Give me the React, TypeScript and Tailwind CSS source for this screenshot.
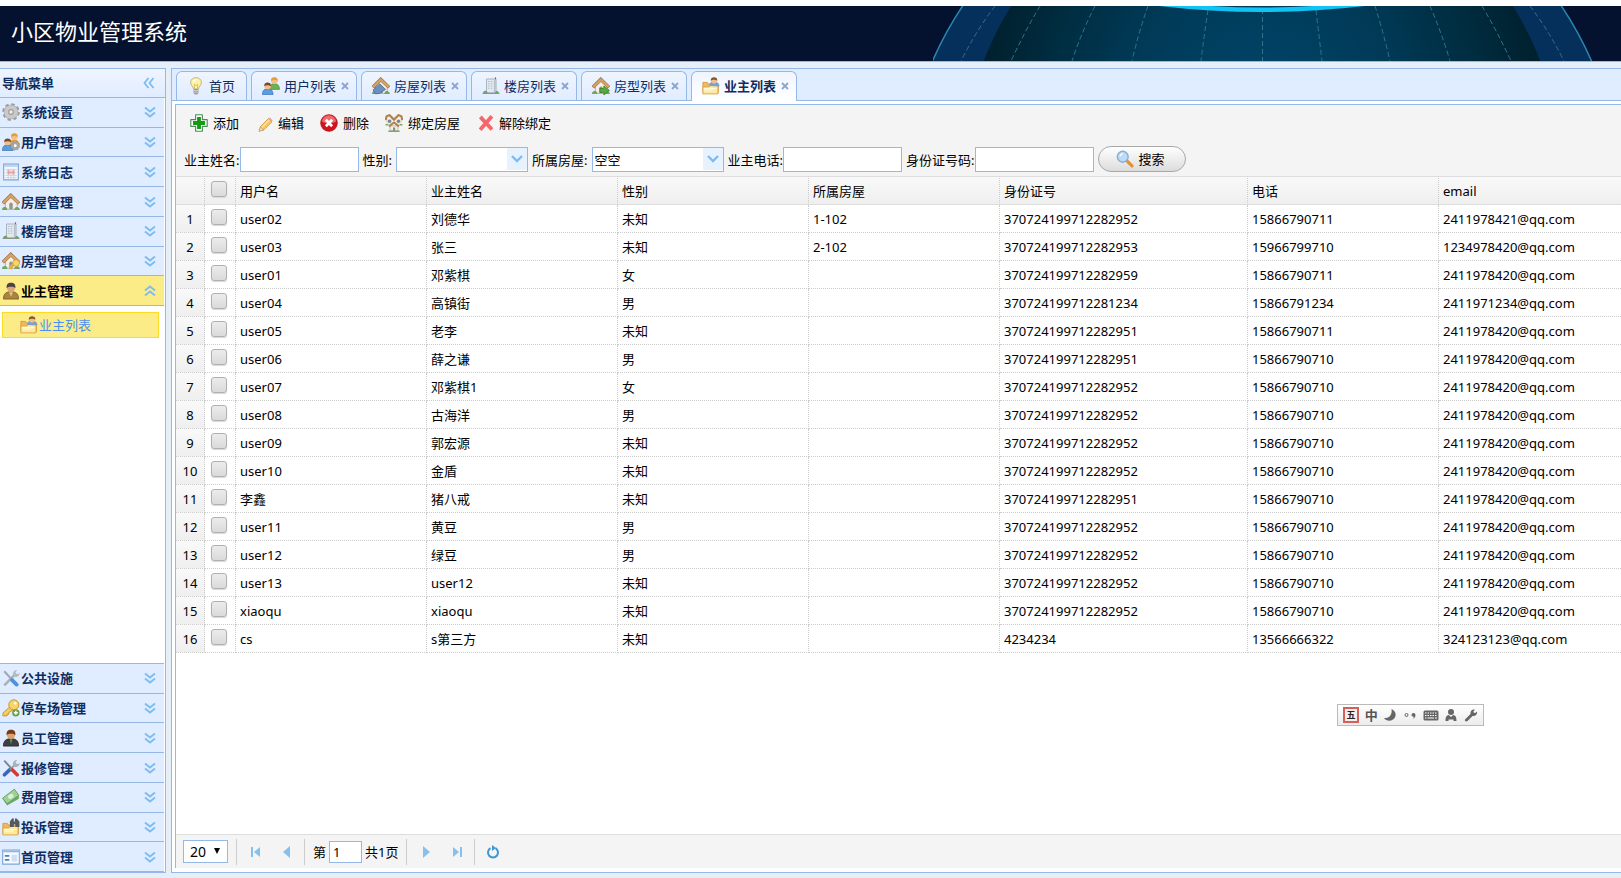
import { ReactNode } from "react";

type IconProps = { children: ReactNode };

const Icon = ({ children }: IconProps) => (
  <svg viewBox="0 0 16 16" className="size-[18px] shrink-0" aria-hidden="true">
    {children}
  </svg>
);

const House = () => (
  <>
    <path d="M3 8v6.5h10.500V8L8 3.500z" fill="#f3efe6" stroke="#a9a294" strokeWidth=".7" />
    <path d="M.8 9.200 7.800 2.200 15.200 9.200" fill="none" stroke="#9a6a38" strokeWidth="3" />
    <path d="M1 9 7.800 2.300 15 9" fill="none" stroke="#d6a368" strokeWidth="2" />
    <path d="M6.500 14.500V10a1.500 1.500 0 0 1 3 0v4.500z" fill="#8f959b" />
    <path d="M0 15c0-2 1.500-3 3-2.500s2 1.500 1.500 2.500zM11 15c0-2 1.500-3 3-2.300s2 1.300 1.800 2.300z" fill="#6fa65c" />
  </>
);

const Building = () => (
  <>
    <path d="M4 1.800h8.500v12.200H4z" fill="#e4e9ef" stroke="#a3abb5" strokeWidth=".8" />
    <path d="M10.500 2.200h1.700v11.500h-1.700z" fill="#b9c2cc" />
    <path d="M5.500 4h1.200M7.800 4H9M5.500 6h1.200M7.800 6H9M5.500 8h1.200M7.800 8H9M5.500 10h1.200M7.800 10H9" stroke="#9db8d8" />
    <path d="M12 2V.3" stroke="#c44" />
    <path d="M1 14.800c0-2 1-2.800 2.400-2.500S5 14 5 14.800zM11.500 14.800c0-2 1-2.600 2-2.300s1.700 1.300 1.700 2.300z" fill="#6aa55c" />
    <path d="M.5 14.600h15" stroke="#8b9884" />
  </>
);

const Folder = () => (
  <>
    <path d="M.8 4.800h4l1 1.500h8.700V14H.8z" fill="#efb95c" stroke="#d09038" strokeWidth=".7" />
    <path d="M.8 15V8.800h5.400l1.200-1.300h6.800V15z" fill="#fdeaa0" stroke="#dba444" strokeWidth=".8" />
    <path d="M2 10.200h10.800M2 11.500h8" stroke="#fffbe0" />
  </>
);

const icons: Record<string, ReactNode> = {
  bulb: (
    <>
      <path d="M5.800 10.500C5.600 8.500 3.200 7.500 3.200 4.900 3.200 2.300 5.300.6 8 .6s4.800 1.700 4.800 4.300c0 2.600-2.400 3.600-2.600 5.600z" fill="#fbf3a8" stroke="#bdb072" strokeWidth=".8" />
      <path d="M5.500 4.500c.3-1.300 1.200-2 2.300-2.200" stroke="#fff" fill="none" />
      <path d="M6.700 10 6.500 6.500 8 7.500l1.500-1-.2 3.500" stroke="#d9a441" strokeWidth=".6" fill="none" />
      <path d="M5.800 10.700h4.400v3.500L9 15.500H7l-1.200-1.300z" fill="#9b9ea3" />
      <path d="M5.800 12h4.400M5.800 13.500h4.400" stroke="#d4d6d9" strokeWidth=".7" />
    </>
  ),
  gear: (
    <>
      <circle cx="8" cy="8" r="6.300" fill="none" stroke="#9c9c9c" strokeWidth="3" strokeDasharray="2.800 2.148" />
      <circle cx="8" cy="8" r="4.300" fill="none" stroke="#a8a8a8" strokeWidth="4.400" />
      <circle cx="8" cy="8" r="4.300" fill="none" stroke="#c9c9c9" strokeWidth="3.400" />
      <circle cx="8" cy="8" r="2" fill="#eee" stroke="#8e8e8e" strokeWidth=".8" />
    </>
  ),
  users: (
    <>
      <path d="M6.500 11c0-4 2-5 4.500-5s4.500 1 4.500 5z" fill="#6cb255" stroke="#4b8b3a" strokeWidth=".6" />
      <circle cx="11" cy="3.400" r="2.900" fill="#f0bf8c" />
      <path d="M8 3.600C7.800 1.200 9.300.3 11 .3s3.200.9 3 3.300C12.500 2.300 9.600 2.400 8 3.600z" fill="#e0a13b" />
      <path d="M.4 15.700c0-4.200 2-5.200 4.600-5.200s4.800 1 4.800 5.200z" fill="#5b9bdf" stroke="#3972b5" strokeWidth=".6" />
      <circle cx="5" cy="8" r="2.900" fill="#f0bf8c" />
      <path d="M2 8.200C1.800 5.800 3.300 4.900 5 4.900s3.200.9 3 3.300C6.500 7 3.600 7 2 8.200z" fill="#7a4a24" />
    </>
  ),
  usersGear: (
    <>
      <path d="M6.500 11c0-4 2-5 4.500-5s4.500 1 4.500 5z" fill="#e2a045" />
      <circle cx="11" cy="3.400" r="2.900" fill="#f0bf8c" />
      <path d="M8 3.600C7.800 1.200 9.300.3 11 .3s3.200.9 3 3.300C12.500 2.300 9.600 2.400 8 3.600z" fill="#e0a13b" />
      <path d="M.4 15.700c0-4.200 2-5.200 4.600-5.200s4.800 1 4.800 5.200z" fill="#5b9bdf" stroke="#3972b5" strokeWidth=".6" />
      <circle cx="5" cy="8" r="2.900" fill="#f0bf8c" />
      <path d="M2 8.200C1.800 5.800 3.300 4.900 5 4.900s3.200.9 3 3.300C6.500 7 3.600 7 2 8.200z" fill="#7a4a24" />
      <circle cx="11.800" cy="11.300" r="2.600" fill="#fff" stroke="#a6a6a6" strokeWidth="2.600" />
      <circle cx="11.800" cy="11.300" r="4" fill="none" stroke="#8f8f8f" strokeWidth=".8" strokeDasharray="1.600 1.540" />
    </>
  ),
  log: (
    <>
      <path d="M1.500 1h13v14h-13z" fill="#f4f8fd" stroke="#7fa3d0" />
      <path d="M2 1.500h12v2H2z" fill="#bcd4f0" />
      <path d="M3 6h10M3 8.500h10M3 11h10M3 13h10M5.500 5v9M8 5v9M10.500 5v9" stroke="#c3d2e4" strokeWidth=".8" />
      <path d="M5 6.500h1.700v1.300h2.600V6.500H11v3.700H9.300V9H6.700v1.200H5z" fill="#f39a94" />
    </>
  ),
  house: <House />,
  houseBlue: (
    <>
      <House />
      <path d="M1 11.500 7 6l5 5-5 3.500L3 15z" fill="#6b8fbe" stroke="#49688f" strokeWidth=".7" />
    </>
  ),
  houseGo: (
    <>
      <House />
      <path d="M7 10.200h3.500V8l5 4-5 4v-2.200H7z" fill="#58a83d" stroke="#3b7d27" strokeWidth=".7" />
    </>
  ),
  houseKey: (
    <>
      <House />
      <path d="m7.500 15.300.3-2 3-2.800" fill="none" stroke="#e6b03a" strokeWidth="2.600" />
      <circle cx="12.500" cy="9.800" r="3" fill="#f9d96e" stroke="#d0992f" strokeWidth=".8" />
    </>
  ),
  houses: (
    <>
      <path d="M1 4.500h5V9H1zM10 4.500h5V9h-5z" fill="#eee8da" />
      <path d="M.5 5.500 1.500 2 4 1l4 4 4-4 2.500 1 1 3.500" fill="none" stroke="#b3824c" strokeWidth="1.900" />
      <circle cx="4" cy="6.500" r="1.600" fill="#7d8791" />
      <circle cx="12" cy="6.500" r="1.600" fill="#7d8791" />
      <path d="M4.500 10.500h7V15h-7z" fill="#f2eee4" stroke="#a9a294" strokeWidth=".6" />
      <path d="M3.500 11 8 7.500l4.500 3.500" fill="none" stroke="#b3824c" strokeWidth="1.700" />
      <path d="M7.200 12h1.800v3H7.200z" fill="#7d8791" />
      <path d="M.5 9.500h2.500M13 9.500h2.500M3 15.300h10" stroke="#7aa866" strokeWidth="1.300" />
    </>
  ),
  building: <Building />,
  owner: (
    <>
      <path d="M1.300 15.200c0-5.200 2.500-6.500 6.700-6.500s6.700 1.300 6.700 6.500z" fill="#a98440" stroke="#745820" strokeWidth=".7" />
      <path d="M6.300 9 8 13l1.700-4z" fill="#dcc88a" />
      <circle cx="8" cy="5.200" r="3.700" fill="#dca878" />
      <path d="M4.200 5.500C3.600 2.200 5.300.6 8 .6s4.400 1.600 3.800 4.900C10.500 3.800 5.500 3.800 4.200 5.500z" fill="#4a4340" />
    </>
  ),
  staff: (
    <>
      <path d="M1.300 15.200c0-5.200 2.500-6.500 6.700-6.500s6.700 1.300 6.700 6.500z" fill="#3f3f43" stroke="#222" strokeWidth=".7" />
      <path d="M6.800 9 8 13.500 9.200 9z" fill="#4ea24a" />
      <circle cx="8" cy="5.200" r="3.700" fill="#dfa06a" />
      <path d="M4.200 5.500C3.600 2.200 5.300.6 8 .6s4.400 1.600 3.800 4.900C10.500 3.800 5.500 3.800 4.200 5.500z" fill="#703c18" />
    </>
  ),
  folderUser: (
    <>
      <Folder />
      <path d="M6.500 8c0-3 1.600-4 4.200-4s4.800 1.300 4.800 4.500z" fill="#7ba0cf" />
      <circle cx="10.700" cy="3.200" r="2.700" fill="#f0bf8c" />
      <path d="M7.800 3.300C7.600 1 9.100.2 10.700.2s3.200.8 2.900 3.100C12.200 2.200 9.300 2.200 7.800 3.300z" fill="#8a5630" />
    </>
  ),
  folderFind: (
    <>
      <Folder />
      <path d="M7 7V3l2-2.500h1.500V3h1V.5H13L15.500 3v5h-3.700V5.500h-1.300V8H7z" fill="#55585e" />
    </>
  ),
  tools: (
    <>
      <path d="M2 14.500 11 5.500" stroke="#aab0b7" strokeWidth="2.200" />
      <path d="M10 5.800c-1-2.500.8-5 3.400-4.800L12 2.800l.8 1.500 1.800.2 1-1.500c.5 2.800-2 4.700-4.500 3.900z" fill="#b5bbc2" />
      <path d="m2 2 6 6.500" stroke="#a0a7af" strokeWidth="1.800" />
      <path d="m9 9.800 4 4" stroke="#4d93d8" strokeWidth="3.400" strokeLinecap="round" />
    </>
  ),
  repair: (
    <>
      <path d="M2.200 14 7 9.500" stroke="#3569b8" strokeWidth="3.200" strokeLinecap="round" />
      <path d="m7 9.500 4-4" stroke="#9ba2aa" strokeWidth="1.800" />
      <path d="M10 5.800c-1-2.500.8-5 3.400-4.800L12 2.800l.8 1.500 1.800.2 1-1.500c.5 2.800-2 4.700-4.500 3.900z" fill="#aab0b7" />
      <path d="m2 1.500 6.500 7" stroke="#7e858d" strokeWidth="1.700" />
      <path d="m9.300 9.800 4.200 4.200" stroke="#d33a35" strokeWidth="3.200" strokeLinecap="round" />
    </>
  ),
  key: (
    <>
      <path d="M7.500 6.500.8 12.500V15h3.700v-1.500H6V12l4-2.500z" fill="#f6ce5a" stroke="#c68f28" strokeWidth=".8" />
      <circle cx="10.500" cy="5.200" r="4.500" fill="#f8d466" stroke="#c68f28" strokeWidth=".8" />
      <circle cx="11.700" cy="3.800" r="1.200" fill="#fff" />
      <circle cx="12.300" cy="12.300" r="3.300" fill="#6c9e4a" />
      <path d="M10.500 12.300h3.600M12.300 10.500v3.600" stroke="#fff" strokeWidth="1.300" />
    </>
  ),
  money: (
    <>
      <path d="M.5 9.500 11 1l4 5.500v3L4.500 15.500z" fill="#6aa965" />
      <path d="M.5 9 11 1l4 5.500L4.500 14z" fill="#9ed198" stroke="#5d9c58" strokeWidth=".7" />
      <ellipse cx="7.800" cy="7.500" rx="2.600" ry="2" fill="#d9f0d5" transform="rotate(-35 7.800 7.500)" />
    </>
  ),
  layout: (
    <>
      <path d="M.6 1.800h14.800v12.500H.6z" fill="#f7faff" stroke="#7fa6d6" />
      <path d="M1 2.200h14v1.600H1z" fill="#8fb6e6" />
      <path d="M2.500 7h4M2.500 10.500h4" stroke="#4f80bd" strokeWidth="1.500" />
      <path d="M8.500 6h5v6h-5z" fill="#cfe0f5" />
    </>
  ),
  add: (
    <>
      <path d="M5 .7h6V5h4.300v6H11v4.300H5V11H.7V5H5z" fill="#fff" stroke="#4c8c54" strokeLinejoin="round" />
      <path d="M6.300 2.700h3.400v3.600h3.600v3.400H9.700v3.600H6.300V9.700H2.700V6.300h3.600z" fill="#129a12" />
    </>
  ),
  edit: (
    <>
      <path d="m4 15 1-4 7-7 3 3-7 7z" fill="#f9c85a" stroke="#cf9134" strokeWidth=".7" />
      <path d="m6 12 7-7" stroke="#fde7a5" />
      <path d="m12 4 1.300-.8 2.300 2.500L15 7z" fill="#e7a1a1" />
      <path d="m3.500 15.500 1.300-4 2.800 2.700z" fill="#f5e4cb" stroke="#a97c4c" strokeWidth=".5" />
    </>
  ),
  remove: (
    <>
      <circle cx="8" cy="8" r="7.400" fill="#d3121d" stroke="#a9131b" strokeWidth=".7" />
      <path d="M1.600 6.500a6.500 6.500 0 0 1 12.800 0c-3 2.500-9.800 2.500-12.800 0z" fill="#ee6a6d" />
      <path d="m5.200 5.200 5.600 5.600m0-5.600-5.600 5.600" stroke="#fff" strokeWidth="2.500" />
    </>
  ),
  cancel: (
    <path d="m5 3.800 8 8.700M13 3.300 4.800 12.800" stroke="#f6666a" strokeWidth="3.400" strokeLinecap="square" />
  ),
  search: (
    <>
      <path d="m9.500 9.500 4.700 4.700" stroke="#e0923a" strokeWidth="2.800" strokeLinecap="round" />
      <circle cx="6" cy="6" r="4.800" fill="#b9dcfb" stroke="#8daecb" strokeWidth="1.300" />
      <path d="M3.500 5.500c.4-1.300 1.400-2 2.700-2" fill="none" stroke="#fff" strokeWidth="1.200" />
    </>
  ),
};

const DoubleChevron = ({ d }: { d: string }) => (
  <svg viewBox="0 0 12 12" className="size-3 shrink-0" fill="none" stroke="#7dbcf0" strokeWidth="1.800" aria-hidden="true">
    <path d={d} />
  </svg>
);

const DOWN = "M1 1.500 6 5.500 11 1.500M1 6.500 6 10.500 11 6.500";
const UP = "M1 5.500 6 1.500 11 5.500M1 10.500 6 6.500 11 10.500";
const LEFT = "M5.500 1 1.500 6 5.500 11M10.500 1 6.500 6 10.500 11";

const topMenu = [
  { icon: "gear", label: "系统设置" },
  { icon: "usersGear", label: "用户管理" },
  { icon: "log", label: "系统日志" },
  { icon: "house", label: "房屋管理" },
  { icon: "building", label: "楼房管理" },
  { icon: "houseKey", label: "房型管理" },
  { icon: "owner", label: "业主管理", active: true },
];

const bottomMenu = [
  { icon: "tools", label: "公共设施" },
  { icon: "key", label: "停车场管理" },
  { icon: "staff", label: "员工管理" },
  { icon: "repair", label: "报修管理" },
  { icon: "money", label: "费用管理" },
  { icon: "folderFind", label: "投诉管理" },
  { icon: "layout", label: "首页管理" },
];

const tabs = [
  { icon: "bulb", label: "首页" },
  { icon: "users", label: "用户列表", closable: true },
  { icon: "houseBlue", label: "房屋列表", closable: true },
  { icon: "building", label: "楼房列表", closable: true },
  { icon: "houseGo", label: "房型列表", closable: true },
  { icon: "folderUser", label: "业主列表", closable: true, active: true },
];

const actions = [
  { icon: "add", label: "添加" },
  { icon: "edit", label: "编辑" },
  { icon: "remove", label: "删除" },
  { icon: "houses", label: "绑定房屋" },
  { icon: "cancel", label: "解除绑定" },
];

const columns = ["用户名", "业主姓名", "性别", "所属房屋", "身份证号", "电话", "email"];

const rows = [
  ["user02", "刘德华", "未知", "1-102", "370724199712282952", "15866790711", "2411978421@qq.com"],
  ["user03", "张三", "未知", "2-102", "370724199712282953", "15966799710", "1234978420@qq.com"],
  ["user01", "邓紫棋", "女", "", "370724199712282959", "15866790711", "2411978420@qq.com"],
  ["user04", "高镇街", "男", "", "370724199712281234", "15866791234", "2411971234@qq.com"],
  ["user05", "老李", "未知", "", "370724199712282951", "15866790711", "2411978420@qq.com"],
  ["user06", "薛之谦", "男", "", "370724199712282951", "15866790710", "2411978420@qq.com"],
  ["user07", "邓紫棋1", "女", "", "370724199712282952", "15866790710", "2411978420@qq.com"],
  ["user08", "古海洋", "男", "", "370724199712282952", "15866790710", "2411978420@qq.com"],
  ["user09", "郭宏源", "未知", "", "370724199712282952", "15866790710", "2411978420@qq.com"],
  ["user10", "金盾", "未知", "", "370724199712282952", "15866790710", "2411978420@qq.com"],
  ["李鑫", "猪八戒", "未知", "", "370724199712282951", "15866790710", "2411978420@qq.com"],
  ["user11", "黄豆", "男", "", "370724199712282952", "15866790710", "2411978420@qq.com"],
  ["user12", "绿豆", "男", "", "370724199712282952", "15866790710", "2411978420@qq.com"],
  ["user13", "user12", "未知", "", "370724199712282952", "15866790710", "2411978420@qq.com"],
  ["xiaoqu", "xiaoqu", "未知", "", "370724199712282952", "15866790710", "2411978420@qq.com"],
  ["cs", "s第三方", "未知", "", "4234234", "13566666322", "324123123@qq.com"],
];

const Banner = () => (
  <header className="mt-1.5 flex h-14 shrink-0 items-center justify-between overflow-hidden border-b border-[#95b8e7] bg-[#04112f] pl-[11px]">
    <h1 className="pb-1.5 text-[22px] leading-8 text-white">小区物业管理系统</h1>
    <svg viewBox="0 0 688 55" className="h-[55px] w-[688px] shrink-0" fill="none" aria-hidden="true">
      <defs>
        <radialGradient id="globe" gradientUnits="userSpaceOnUse" cx="329" cy="90" r="290">
          <stop offset="0" stopColor="#00456a" />
          <stop offset=".45" stopColor="#003a57" />
          <stop offset=".75" stopColor="#002c3f" />
          <stop offset="1" stopColor="#001e2b" />
        </radialGradient>
      </defs>
      <circle cx="329" cy="200" r="360" fill="#05305c" stroke="#2a86ad" strokeWidth="1.500" />
      <circle cx="329" cy="159" r="297" fill="url(#globe)" />
      <g stroke="#2f7488" strokeDasharray="5 3">
        <path d="M62 0Q43 25 28 55M107 0Q92 25 78 55M162 0Q149 25 139 55M215 0Q206 25 199 55M275 4Q271 30 268 55M329.500 3V55" />
        <path d="M597 0Q616 25 631 55M549 0Q564 25 578 55M497 0Q508 25 517 55M442 0Q450 25 457 55M383 4Q386 30 389 55" />
      </g>
      <path d="M226 0Q329 12 432 0H380Q329 3 278 0z" fill="#12c4f5" />
    </svg>
  </header>
);

const MenuItem = ({ icon, label, active }: { icon: string; label: string; active?: boolean }) => (
  <button
    type="button"
    className={
      active
        ? "flex flex-1 items-center gap-px border-b border-[#95b8e7] bg-[#fbec88] pr-2 pl-0.5 font-bold text-black"
        : "flex flex-1 items-center gap-px border-b border-[#95b8e7] bg-[#e0ecff] pr-2 pl-0.5 font-bold text-[#0e2d5f]"
    }
  >
    <Icon>{icons[icon]}</Icon>
    <span className="flex-1 text-left">{label}</span>
    <DoubleChevron d={active ? UP : DOWN} />
  </button>
);

const Sidebar = () => (
  <aside className="flex w-[166px] shrink-0 flex-col border-y border-r border-[#95b8e7] bg-white">
    <div className="flex h-[29px] items-center justify-between border-b border-[#95b8e7] bg-linear-to-b from-[#eff5ff] to-[#e0ecff] pr-2.5 pl-0.5 font-bold text-[#0e2d5f]">
      导航菜单
      <DoubleChevron d={LEFT} />
    </div>
    <nav className="flex flex-1 flex-col pr-px">
      <div className="flex h-[208px] flex-col">
        {topMenu.map((item) => (
          <MenuItem key={item.label} {...item} />
        ))}
      </div>
      <div className="flex-1 pt-1.5 pr-[5px] pl-0.5">
        <a href="#owners" className="flex h-[26px] items-center gap-px border border-[#fbdc20] bg-[#fbec88] pl-[17px] text-[#4a90f5]">
          <Icon>{icons.folderUser}</Icon>
          业主列表
        </a>
      </div>
      <div className="flex h-[209px] flex-col border-t border-[#95b8e7]">
        {bottomMenu.map((item) => (
          <MenuItem key={item.label} {...item} />
        ))}
      </div>
    </nav>
  </aside>
);

const TabStrip = () => (
  <div className="flex h-8 shrink-0 items-end gap-1 border-b border-[#95b8e7] bg-[#e0ecff] pl-1">
    {tabs.map(({ icon, label, closable, active }) => (
      <div
        key={label}
        className={
          active
            ? "-mb-px flex h-[30px] items-center gap-1 rounded-t-md border border-b-0 border-[#95b8e7] bg-linear-to-b from-[#eff5ff] to-white pr-1.5 pb-0.5 pl-2.5 font-bold text-[#0e2d5f]"
            : "flex h-[29px] items-center gap-1 rounded-t-md border border-b-0 border-[#95b8e7] bg-linear-to-b from-[#eff5ff] to-[#e0ecff] pr-1.5 pb-px pl-2.5 text-[#0e2d5f]"
        }
      >
        <button type="button" className={closable ? "flex items-center gap-1" : "flex items-center gap-1 pr-[5px]"}>
          <Icon>{icons[icon]}</Icon>
          {label}
        </button>
        {closable && (
          <button type="button" aria-label={"关闭" + label} className="flex w-[10px] justify-center">
            <svg viewBox="0 0 8 8" className="size-2" stroke="#8aa5d0" strokeWidth="1.800">
              <path d="m1 1 6 6M7 1 1 7" />
            </svg>
          </button>
        )}
      </div>
    ))}
  </div>
);

const TextField = ({ id, label }: { id: string; label: string }) => (
  <div className="flex items-center">
    <label htmlFor={id}>{label}:</label>
    <input id={id} type="text" className="h-[25px] w-[119px] border border-[#95b8e7] bg-white px-1 outline-none" />
  </div>
);

const Combo = ({ id, label, value }: { id: string; label: string; value: string }) => (
  <div className="flex items-center gap-1">
    <label htmlFor={id}>{label}:</label>
    <div className="relative">
      <select id={id} className="block h-[25px] w-[132px] appearance-none border border-[#95b8e7] bg-white pr-6 pl-0.5 outline-none">
        <option>{value}</option>
      </select>
      <span className="pointer-events-none absolute top-px right-px flex h-[22px] w-5 items-center justify-center bg-[#e8f2ff]">
        <svg viewBox="0 0 12 8" className="h-2 w-3" fill="none" stroke="#7dbcf0" strokeWidth="2.400">
          <path d="m1 1 5 5 5-5" />
        </svg>
      </span>
    </div>
  </div>
);

const Toolbar = () => (
  <div className="shrink-0 bg-[#f4f4f4]">
    <div className="flex h-[38px] items-center gap-4 pb-0.5 pl-3.5">
      {actions.map(({ icon, label }) => (
        <button key={label} type="button" className="flex items-center gap-[5px]">
          <Icon>{icons[icon]}</Icon>
          {label}
        </button>
      ))}
    </div>
    <form className="flex h-[33px] items-center gap-1 pl-2">
      <TextField id="name" label="业主姓名" />
      <Combo id="sex" label="性别" value="" />
      <Combo id="house" label="所属房屋" value="空空" />
      <TextField id="phone" label="业主电话" />
      <TextField id="idcard" label="身份证号码" />
      <button
        type="button"
        className="mb-0.5 flex h-[26px] w-[88px] items-center justify-center gap-1 rounded-full border border-[#a8a8a8] bg-linear-to-b from-white to-[#dcdcdc] pr-0.5"
      >
        <Icon>{icons.search}</Icon>
        搜索
      </button>
    </form>
  </div>
);

const Check = ({ label }: { label: string }) => (
  <input
    type="checkbox"
    aria-label={label}
    className="block size-4 appearance-none rounded-[3px] border border-[#b0b0b0] bg-linear-to-b from-[#ececec] to-[#dadada] shadow-[0_1px_1px_#d8d8d8]"
  />
);

const OwnerTable = () => (
  <div className="min-h-0 flex-1 overflow-hidden bg-white">
    <table className="w-full table-fixed border-separate border-spacing-0 text-left whitespace-nowrap">
      <colgroup>
        <col className="w-[29px]" />
        <col className="w-[31px]" />
        <col className="w-[191px]" />
        <col className="w-[191px]" />
        <col className="w-[191px]" />
        <col className="w-[191px]" />
        <col className="w-[248px]" />
        <col className="w-[191px]" />
        <col />
      </colgroup>
      <thead className="[&_th]:h-[29px] [&_th]:border-y [&_th]:border-r [&_th]:border-y-[#ddd] [&_th]:border-r-[#ccc] [&_th]:bg-linear-to-b [&_th]:from-[#f9f9f9] [&_th]:to-[#efefef] [&_th]:font-normal [&_th]:[border-right-style:dotted]">
        <tr>
          <th aria-label="序号" />
          <th className="pb-1 pl-1.5">
            <Check label="全选" />
          </th>
          {columns.map((column) => (
            <th key={column} className="px-1 last:border-r-0">
              {column}
            </th>
          ))}
        </tr>
      </thead>
      <tbody>
        {rows.map((row, i) => (
          <tr key={i} className="[&>td]:h-7 [&>td]:border-r [&>td]:border-b [&>td]:border-dotted [&>td]:border-[#ccc]">
            <td className="bg-linear-to-b from-[#f9f9f9] to-[#efefef] text-center">{i + 1}</td>
            <td className="pb-1 pl-1.5">
              <Check label={"选择" + row[0]} />
            </td>
            {row.map((cell, j) => (
              <td key={j} className="px-1 last:border-r-0">
                {cell}
              </td>
            ))}
          </tr>
        ))}
      </tbody>
    </table>
  </div>
);

const PagerButton = ({ label, d }: { label: string; d: string }) => (
  <button type="button" aria-label={label} className="flex size-[26px] items-center justify-center">
    <svg viewBox="0 0 12 12" className="size-3" fill="#84c1f0">
      <path d={d} />
    </svg>
  </button>
);

const Divider = () => <span className="h-[26px] w-px bg-[#ccc]" />;

const Pager = () => (
  <div className="flex h-[34px] shrink-0 items-center border-t border-[#ddd] bg-[#f4f4f4] pl-[7px]">
    <div className="relative mr-2">
      <select aria-label="每页条数" className="block h-[23px] w-[45px] appearance-none border border-[#95b8e7] bg-white pl-1.5 text-[14px] leading-5 outline-none">
        <option>20</option>
      </select>
      <svg viewBox="0 0 8 8" className="pointer-events-none absolute top-[7px] right-[7px] size-2">
        <path d="M1 1h6L4 7z" />
      </svg>
    </div>
    <Divider />
    <div className="flex w-[67px] items-center justify-between pr-1 pl-1.5">
      <PagerButton label="首页" d="M1 1h2v10H1zM10 1v10L4 6z" />
      <PagerButton label="上一页" d="M9 0v12L2 6z" />
    </div>
    <Divider />
    <label htmlFor="page" className="pr-[3px] pl-2">
      第
    </label>
    <input id="page" type="text" defaultValue="1" className="mr-[3px] h-[22px] w-[33px] border border-[#95b8e7] bg-white pl-[3px] outline-none" />
    <span className="pr-2">共1页</span>
    <Divider />
    <div className="flex w-[67px] items-center justify-between pr-1 pl-1.5">
      <PagerButton label="下一页" d="M3 0v12l7-6z" />
      <PagerButton label="末页" d="M2 1v10l6-5zM9 1h2v10H9z" />
    </div>
    <Divider />
    <button type="button" aria-label="刷新" className="flex h-[26px] w-9 items-center justify-center">
      <svg viewBox="0 0 14 14" className="size-3.5" fill="none" stroke="#3f97d8" strokeWidth="2">
        <path d="M4.500 3.200A5 5 0 1 0 9.500 3.200" />
        <path d="M6 0v6l4-3z" fill="#3f97d8" stroke="none" />
      </svg>
    </button>
  </div>
);

/* floating input-method bar */
const ImeBar = () => (
  <div className="fixed right-[137px] bottom-[152px] flex h-[22px] w-[147px] items-center justify-between border border-[#bbb] bg-linear-to-b from-white to-[#ececec] px-[5px] text-[#555]">
    <span className="flex size-4 items-center justify-center border-2 border-double border-[#d4605a] bg-[#f4eeee] text-[9px] leading-3 font-bold text-[#222]">五</span>
    <span className="text-[13px] leading-4 font-bold">中</span>
    <svg viewBox="0 0 14 14" className="size-3.5" fill="#666">
      <path d="M8.500 1c5 2 5.500 8 1.500 10.500-3 2-7 1.500-9-1.500C6 10.500 9.500 7 8.500 1z" />
    </svg>
    <svg viewBox="0 0 14 14" className="size-3.5">
      <circle cx="3.500" cy="7" r="1.500" fill="none" stroke="#666" />
      <path d="M8.500 7a2 2 0 1 1 4 0c0 2-1 3-2.800 4 .9-1 1.100-1.600 1-2.300-1.200 0-2.200-.7-2.200-1.700z" fill="#666" />
    </svg>
    <svg viewBox="0 0 16 14" className="h-3.5 w-4">
      <rect x=".5" y="2.500" width="15" height="10" rx="1.500" fill="#666" />
      <path d="M2 5h12M2 7.500h12" stroke="#fff" strokeDasharray="1.500 1" />
      <path d="M2 10h1.500M4.500 10h6.500M12 10h2" stroke="#fff" />
    </svg>
    <svg viewBox="0 0 14 14" className="size-3.5" fill="#666">
      <circle cx="7" cy="4" r="3" />
      <path d="M1.500 13c0-4 1-5.700 3.300-6L7 9l2.200-2c2.300.3 3.300 2 3.300 6h-3v-1.500h-5V13z" />
    </svg>
    <svg viewBox="0 0 14 14" className="size-3.5" fill="#666">
      <path d="M1 11.500 6.500 6C6 3 8 1 11 1.500L9.500 3.300l.3 1.400 1.400.3L13 3.500c.5 3-1.800 5-4.500 4.500L3.500 13C2 14 .2 13 1 11.500z" />
    </svg>
  </div>
);

export default function App() {
  return (
    <div className="flex h-screen flex-col overflow-hidden bg-white font-['Noto_Sans','Noto_Sans_CJK_SC',sans-serif] text-[13px] leading-5 text-black">
      <Banner />
      <main className="flex min-h-0 flex-1 gap-[5px] bg-[#e6eef8] pt-1.5 pb-[5px]">
        <Sidebar />
        <section className="flex min-w-0 flex-1 flex-col border-y border-l border-[#95b8e7] bg-white">
          <TabStrip />
          <div className="mt-[3px] mb-1 ml-[3px] flex min-h-0 flex-1 flex-col border-t border-l border-[#95b8e7]">
            <Toolbar />
            <OwnerTable />
            <Pager />
          </div>
        </section>
      </main>
      <ImeBar />
    </div>
  );
}
